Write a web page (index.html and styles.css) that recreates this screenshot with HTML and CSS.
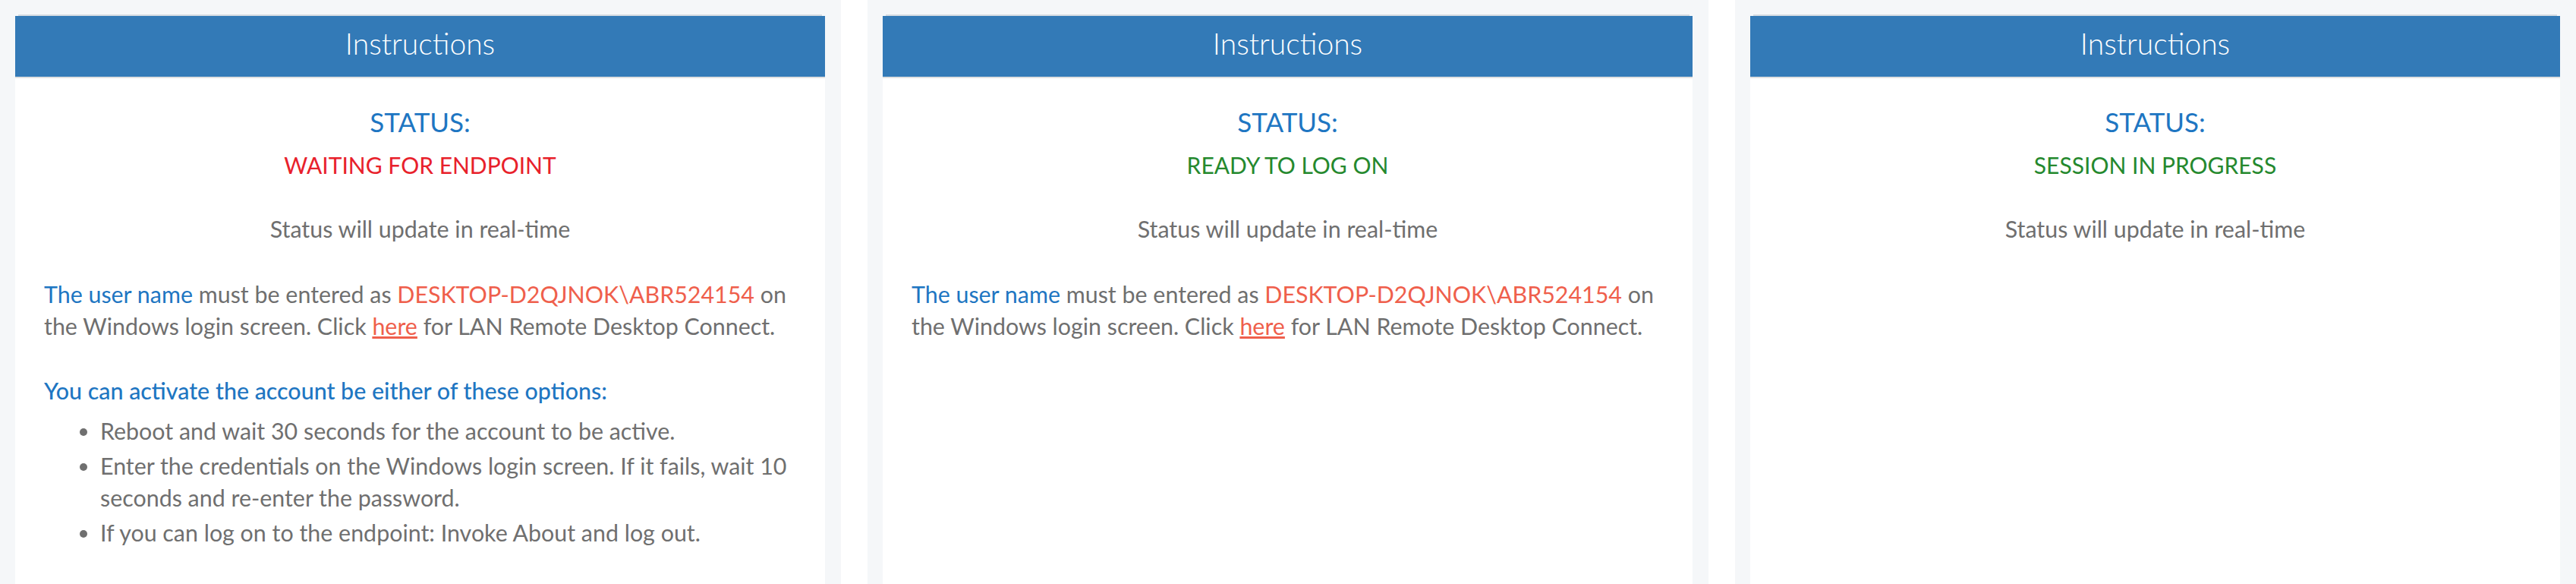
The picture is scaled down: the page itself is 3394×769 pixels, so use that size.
FILE: index.html
```html
<!DOCTYPE html>
<html lang="en">
<head>
  <meta charset="UTF-8">
  <title>Endpoint Log On</title>
  <link rel="stylesheet" href="styles.css">
</head>
<body>
  <div class="board">

    <section class="column">
      <div class="panel">
        <div class="panel-heading">Instructions</div>
        <div class="panel-body">
          <p class="status-label">STATUS:</p>
          <p class="status-value waiting">WAITING FOR ENDPOINT</p>
          <p class="status-note">Status will update in real-time</p>
          <p class="login-info">
            <span class="accent">The user name</span> must be entered as
            <span class="account">DESKTOP-D2QJNOK\ABR524154</span> on the Windows login screen.
            Click <a href="#" class="link">here</a> for LAN Remote Desktop Connect.
          </p>
          <p class="options-title">You can activate the account be either of these options:</p>
          <ul class="options">
            <li>Reboot and wait 30 seconds for the account to be active.</li>
            <li>Enter the credentials on the Windows login screen. If it fails, wait 10 seconds and re-enter the password.</li>
            <li>If you can log on to the endpoint: Invoke About and log out.</li>
          </ul>
        </div>
      </div>
    </section>

    <section class="column">
      <div class="panel">
        <div class="panel-heading">Instructions</div>
        <div class="panel-body">
          <p class="status-label">STATUS:</p>
          <p class="status-value ready">READY TO LOG ON</p>
          <p class="status-note">Status will update in real-time</p>
          <p class="login-info">
            <span class="accent">The user name</span> must be entered as
            <span class="account">DESKTOP-D2QJNOK\ABR524154</span> on the Windows login screen.
            Click <a href="#" class="link">here</a> for LAN Remote Desktop Connect.
          </p>
        </div>
      </div>
    </section>

    <section class="column">
      <div class="panel">
        <div class="panel-heading">Instructions</div>
        <div class="panel-body">
          <p class="status-label">STATUS:</p>
          <p class="status-value ready">SESSION IN PROGRESS</p>
          <p class="status-note">Status will update in real-time</p>
        </div>
      </div>
    </section>

  </div>
</body>
</html>
```

FILE: styles.css
```css
html, body {
  height: 100%;
}
body {
  margin: 0;
  background-color: #ffffff;
  font-family: 'Lato', 'Liberation Sans', sans-serif;
  font-size: 30.4px;
  line-height: 42px;
  color: #6f6f6f;
  overflow: hidden;
}
.board {
  display: grid;
  grid-template-columns: repeat(3, 1fr);
  column-gap: 35px;
  height: 100%;
}
.column {
  display: flex;
  flex-direction: column;
  background-color: #f5f7f9;
  padding: 21px 21px 0 20px;
}
.panel {
  flex: 1;
  background-color: #ffffff;
  box-shadow: 0 -6px 0 -4px #d6dce2;
}
.panel-heading {
  height: 73px;
  padding-bottom: 7px;
  line-height: 73px;
  text-align: center;
  font-size: 39px;
  font-weight: 300;
  color: #ffffff;
  background-color: #337ab7;
  border-bottom: 2px solid #e0e0e0;
}
.panel-body {
  padding: 36px 38px 0 38px;
}
.panel-body p {
  margin: 0;
}
.status-label {
  text-align: center;
  font-size: 35px;
  color: #1e76c2;
}
.status-value {
  margin-top: 15px !important;
  text-align: center;
  font-size: 30px;
}
.waiting { color: #e8212b; }
.ready { color: #25892e; }
.status-note {
  margin-top: 42px !important;
  text-align: center;
}
.login-info {
  margin-top: 44px !important;
}
.accent {
  color: #1e76c2;
}
.account {
  color: #ef5f4c;
}
.link {
  color: #ef5f4c;
  text-decoration: underline;
}
.options-title {
  margin-top: 43px !important;
  color: #1e76c2;
  font-weight: 500;
}
.options {
  margin: 11px -16px 0 0;
  padding-left: 74px;
}
.options li {
  margin-bottom: 4px;
}
```
